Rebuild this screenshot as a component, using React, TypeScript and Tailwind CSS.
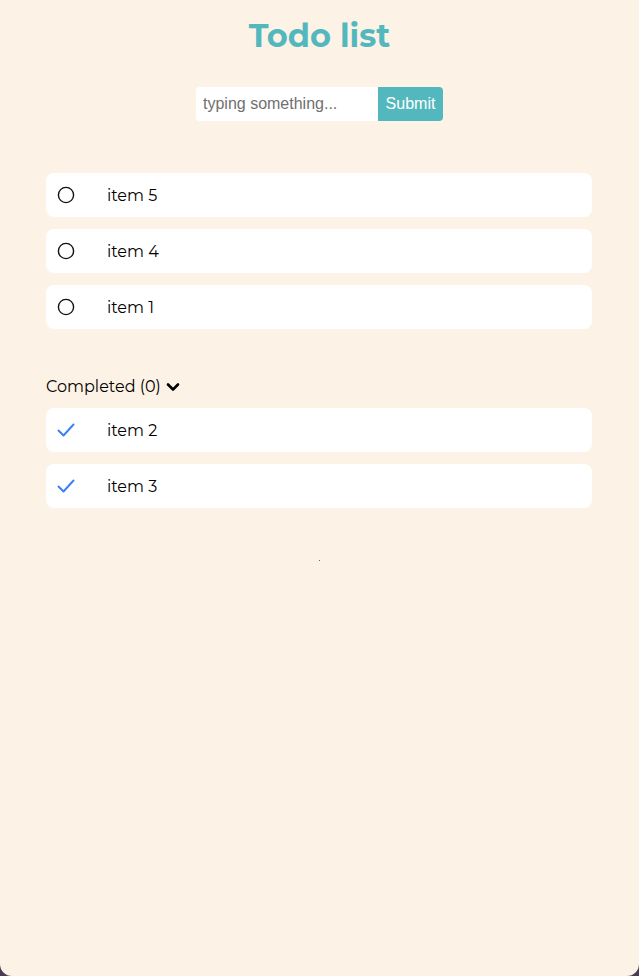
import React from "react";

const Circle = () => (
  <svg width="18" height="18" viewBox="0 0 18 18" className="shrink-0">
    <circle cx="9" cy="9" r="7.6" fill="none" stroke="#111" strokeWidth="1.4" />
  </svg>
);

const Check = () => (
  <svg width="20" height="18" viewBox="0 0 20 18" className="shrink-0 -ml-[1px]">
    <path d="M2.5 9.5 L7.5 14.5 L17.5 3.5" fill="none" stroke="#3b82f6" strokeWidth="2" strokeLinecap="round" strokeLinejoin="round" />
  </svg>
);

const Row = ({ label, done }: { label: string; done?: boolean }) => (
  <div className="flex h-[44px] items-center rounded-[8px] bg-white pl-[11px]">
    <div className="flex w-[50px] items-center">{done ? <Check /> : <Circle />}</div>
    <span className="pt-[1px] text-[16px] text-black">{label}</span>
  </div>
);

export default function App() {
  return (
    <div className="h-[976px] w-[639px] bg-[#4a3a52]">
      <div
        className="flex h-[976px] w-[639px] flex-col items-center rounded-b-[12px] bg-[#fdf2e6]"
        style={{ fontFamily: "Montserrat, 'Noto Sans', 'Open Sans', sans-serif" }}
      >
        <h1 className="mt-[15px] text-[32px] font-bold leading-[42px] text-[#53b8bd]">
          Todo list
        </h1>
        <div className="mt-[30px] flex h-[34px]">
          <input
            placeholder="typing something..."
            className="h-[34px] w-[182px] rounded-l-[4px] bg-white px-[7px] text-[16px] text-black outline-none placeholder:text-[#707070]"
            style={{ fontFamily: "'Liberation Sans', Arial, sans-serif" }}
          />
          <button
            className="h-[34px] w-[65px] rounded-r-[4px] bg-[#53b8bd] text-[16px] text-white"
            style={{ fontFamily: "'Liberation Sans', Arial, sans-serif" }}
          >
            Submit
          </button>
        </div>
        <div className="w-full pl-[46px] pr-[47px]">
          <div className="mt-[52px] flex flex-col gap-[12px]">
            <Row label="item 5" />
            <Row label="item 4" />
            <Row label="item 1" />
          </div>
          <div className="mt-[46px] flex items-center gap-[5px] text-[16px] text-black">
            <span>Completed (0)</span>
            <svg width="14" height="10" viewBox="0 0 14 10">
              <path d="M2 2.5 L7 7.5 L12 2.5" fill="none" stroke="#000" strokeWidth="2.6" strokeLinecap="round" strokeLinejoin="round" />
            </svg>
          </div>
          <div className="mt-[9px] flex flex-col gap-[12px]">
            <Row label="item 2" done />
            <Row label="item 3" done />
          </div>
        </div>
        <div className="mt-[52px] h-[1px] w-[1px] bg-[#666]" />
      </div>
    </div>
  );
}
